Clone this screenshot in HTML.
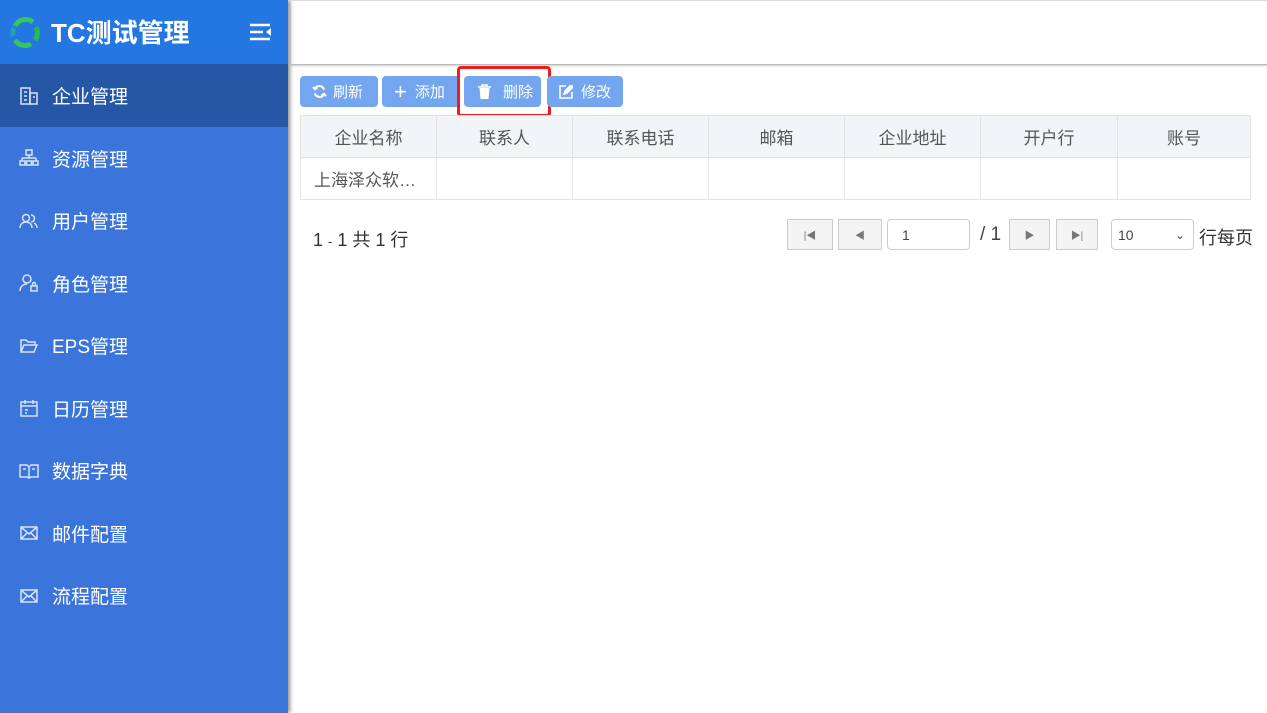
<!DOCTYPE html>
<html><head><meta charset="utf-8"><style>
*{box-sizing:border-box;margin:0;padding:0}
body{width:1267px;height:713px;overflow:hidden;background:#fff;font-family:"Liberation Sans","Noto Sans CJK SC",sans-serif;position:relative}
.side{position:absolute;left:0;top:0;width:288px;height:713px;background:#3b74db;box-shadow:2px 0 4px rgba(0,0,0,.45)}
.logo{height:64px;background:#2477e0;display:flex;align-items:center;color:#fff;font-size:26px;font-weight:bold;font-family:"Liberation Sans","Noto Sans CJK SC",sans-serif}
.item{height:62.5px;display:flex;align-items:center;color:#fff;font-size:19px;padding-left:19px;padding-top:1px}
.item svg{margin-right:13px}
.item.act{background:#2657a6}
.top{position:absolute;left:291px;top:0;right:0;height:65px;border-bottom:1px solid #bbb;box-shadow:0 1px 2px rgba(0,0,0,.2);border-top:1px solid #ddd}
.btn{position:absolute;top:76px;height:31px;background:#73a6ee;border-radius:4px;color:#fff;font-size:15px;display:flex;align-items:center;padding-left:12px}
table{position:absolute;left:300px;top:115px;border-collapse:collapse;font-size:17px;color:#555}
td{border:1px solid #e4e4e4;height:42px;text-align:center}
tr.h td{background:#f3f4f7}
.pg{position:absolute;top:219px;height:31px;border:1px solid #ccc;background:#f4f4f4;display:flex;align-items:center;justify-content:center;color:#777;font-size:10px}
</style></head><body>
<div class="side">
<div class="logo"><svg width="32" height="32" viewBox="0 0 32 32" style="margin:0 10px 0 9px"><path d="M6 10A12 12 0 0 1 24 6" stroke="#38c75a" stroke-width="5" fill="none"/><path d="M27 11A12 12 0 0 1 26 24" stroke="#2db84d" stroke-width="5" fill="none"/><path d="M22 28A12 12 0 0 1 6 24" stroke="#39c460" stroke-width="5" fill="none"/><path d="M4 20A12 12 0 0 1 5 12" stroke="#2a9fb0" stroke-width="5" fill="none"/></svg><span style="margin-top:-2px">TC测试管理</span>
<svg width="22" height="18" style="margin-left:60px" viewBox="0 0 22 18"><path d="M0 2h20M0 9h13M0 16h20" stroke="#fff" stroke-width="2.5"/><path d="M21 5v8l-5-4z" fill="#fff"/></svg></div>
<div class="item act"><svg width="20" height="20" viewBox="0 0 20 20" fill="none" stroke="#d8e4f7" stroke-width="1.5"><rect x="2" y="2" width="9" height="16"/><rect x="11" y="7" width="7" height="11"/><path d="M5 6h3M5 10h3M5 14h3M14 11h2"/></svg>企业管理</div>
<div class="item"><svg width="20" height="20" viewBox="0 0 20 20" fill="none" stroke="#d8e4f7" stroke-width="1.5"><rect x="7" y="2" width="6" height="5"/><path d="M10 7v3M3 10h14M3 10v3M17 10v3"/><rect x="1" y="13" width="5" height="4"/><rect x="7.5" y="13" width="5" height="4"/><rect x="14" y="13" width="5" height="4"/></svg>资源管理</div>
<div class="item"><svg width="20" height="20" viewBox="0 0 20 20" fill="none" stroke="#d8e4f7" stroke-width="1.5"><circle cx="7" cy="7" r="3.5"/><path d="M1 17c0-4 3-6 6-6s6 2 6 6M12 4a3.5 3.5 0 0 1 0 7M15 12c2 1 3 3 3 5"/></svg>用户管理</div>
<div class="item"><svg width="20" height="20" viewBox="0 0 20 20" fill="none" stroke="#d8e4f7" stroke-width="1.5"><circle cx="8" cy="6" r="4"/><path d="M1 18c0-4 3-7 7-7"/><rect x="12" y="13" width="6" height="5"/><path d="M13.5 13v-2a1.5 1.5 0 0 1 3 0v2"/></svg>角色管理</div>
<div class="item"><svg width="20" height="20" viewBox="0 0 20 20" fill="none" stroke="#d8e4f7" stroke-width="1.5"><path d="M2 16V4h5l2 2h7v3M2 16l3-7h13l-3 7z"/></svg>EPS管理</div>
<div class="item"><svg width="20" height="20" viewBox="0 0 20 20" fill="none" stroke="#d8e4f7" stroke-width="1.5"><rect x="2" y="4" width="16" height="14"/><path d="M2 8h16M6 2v4M14 2v4M6 12h3M6 15h2"/></svg>日历管理</div>
<div class="item"><svg width="20" height="20" viewBox="0 0 20 20" fill="none" stroke="#d8e4f7" stroke-width="1.5"><path d="M1 4h7l2 2 2-2h7v12h-7l-2 1-2-1H1zM10 6v11M4 8h3M13 8h3"/></svg>数据字典</div>
<div class="item"><svg width="20" height="20" viewBox="0 0 20 20" fill="none" stroke="#d8e4f7" stroke-width="1.5"><rect x="2" y="4" width="16" height="12"/><path d="M2 4l8 7 8-7M2 16l6-6M18 16l-6-6"/></svg>邮件配置</div>
<div class="item"><svg width="20" height="20" viewBox="0 0 20 20" fill="none" stroke="#d8e4f7" stroke-width="1.5"><rect x="2" y="4" width="16" height="12"/><path d="M2 4l8 7 8-7M2 16l6-6M18 16l-6-6"/></svg>流程配置</div>
</div>
<div class="top"></div>
<div class="btn" style="left:300px;width:78px"><svg width="15" height="15" viewBox="0 0 16 16" fill="none" stroke="#fff" stroke-width="2.2" style="margin-right:6px"><path d="M13 6A5.5 5.5 0 0 0 3 5M3 10a5.5 5.5 0 0 0 10 1"/><path d="M1 3l2 3 3-2M15 13l-2-3-3 2" stroke-width="1.6"/></svg>刷新</div>
<div class="btn" style="left:382px;width:78px"><span style="font-size:22px;margin-right:8px;line-height:1">+</span>添加</div>
<div class="btn" style="left:464px;width:77px"><svg width="13" height="15" viewBox="0 0 13 15" style="margin:0 12px 0 2px"><path d="M0 3h13M4 3V1h5v2" stroke="#fff" stroke-width="1.6" fill="none"/><path d="M1.5 4h10l-1 11h-8z" fill="#fff"/></svg>删除</div>
<div style="position:absolute;left:457px;top:66px;width:94px;height:51px;border:3px solid #ee1c1c;border-radius:4px"></div>
<div class="btn" style="left:547px;width:76px"><svg width="14" height="14" viewBox="0 0 14 14" fill="none" stroke="#fff" stroke-width="1.6" style="margin-right:8px"><path d="M7 1H1v12h12V7"/><path d="M5 9l1-3 6-6 2 2-6 6z" fill="#fff"/></svg>修改</div>
<table>
<tr class="h"><td style="width:136px">企业名称</td><td style="width:136px">联系人</td><td style="width:136px">联系电话</td><td style="width:136px">邮箱</td><td style="width:136px">企业地址</td><td style="width:137px">开户行</td><td style="width:133px">账号</td></tr>
<tr><td style="text-align:left;padding-left:13px">上海泽众软…</td><td></td><td></td><td></td><td></td><td></td><td></td></tr>
</table>
<div style="position:absolute;left:313px;top:226px;font-size:18px;color:#333">1 <span style="font-size:13px">-</span> 1 共 1 行</div>
<div class="pg" style="left:787px;width:46px">|◀</div>
<div class="pg" style="left:838px;width:44px">◀</div>
<div class="pg" style="left:887px;width:83px;background:#fff;border-radius:4px;justify-content:flex-start;padding-left:14px;color:#444;font-size:14px">1</div>
<div style="position:absolute;left:980px;top:224px;font-size:19px;color:#444">/ 1</div>
<div class="pg" style="left:1009px;width:41px">▶</div>
<div class="pg" style="left:1056px;width:42px">▶|</div>
<div class="pg" style="left:1111px;width:83px;background:#fff;border-radius:4px;justify-content:space-between;padding:0 8px 0 6px;color:#444;font-size:14px"><span>10</span><span style="font-size:12px">⌄</span></div>
<div style="position:absolute;left:1199px;top:224px;font-size:18px;color:#333">行每页</div>
</body></html>
